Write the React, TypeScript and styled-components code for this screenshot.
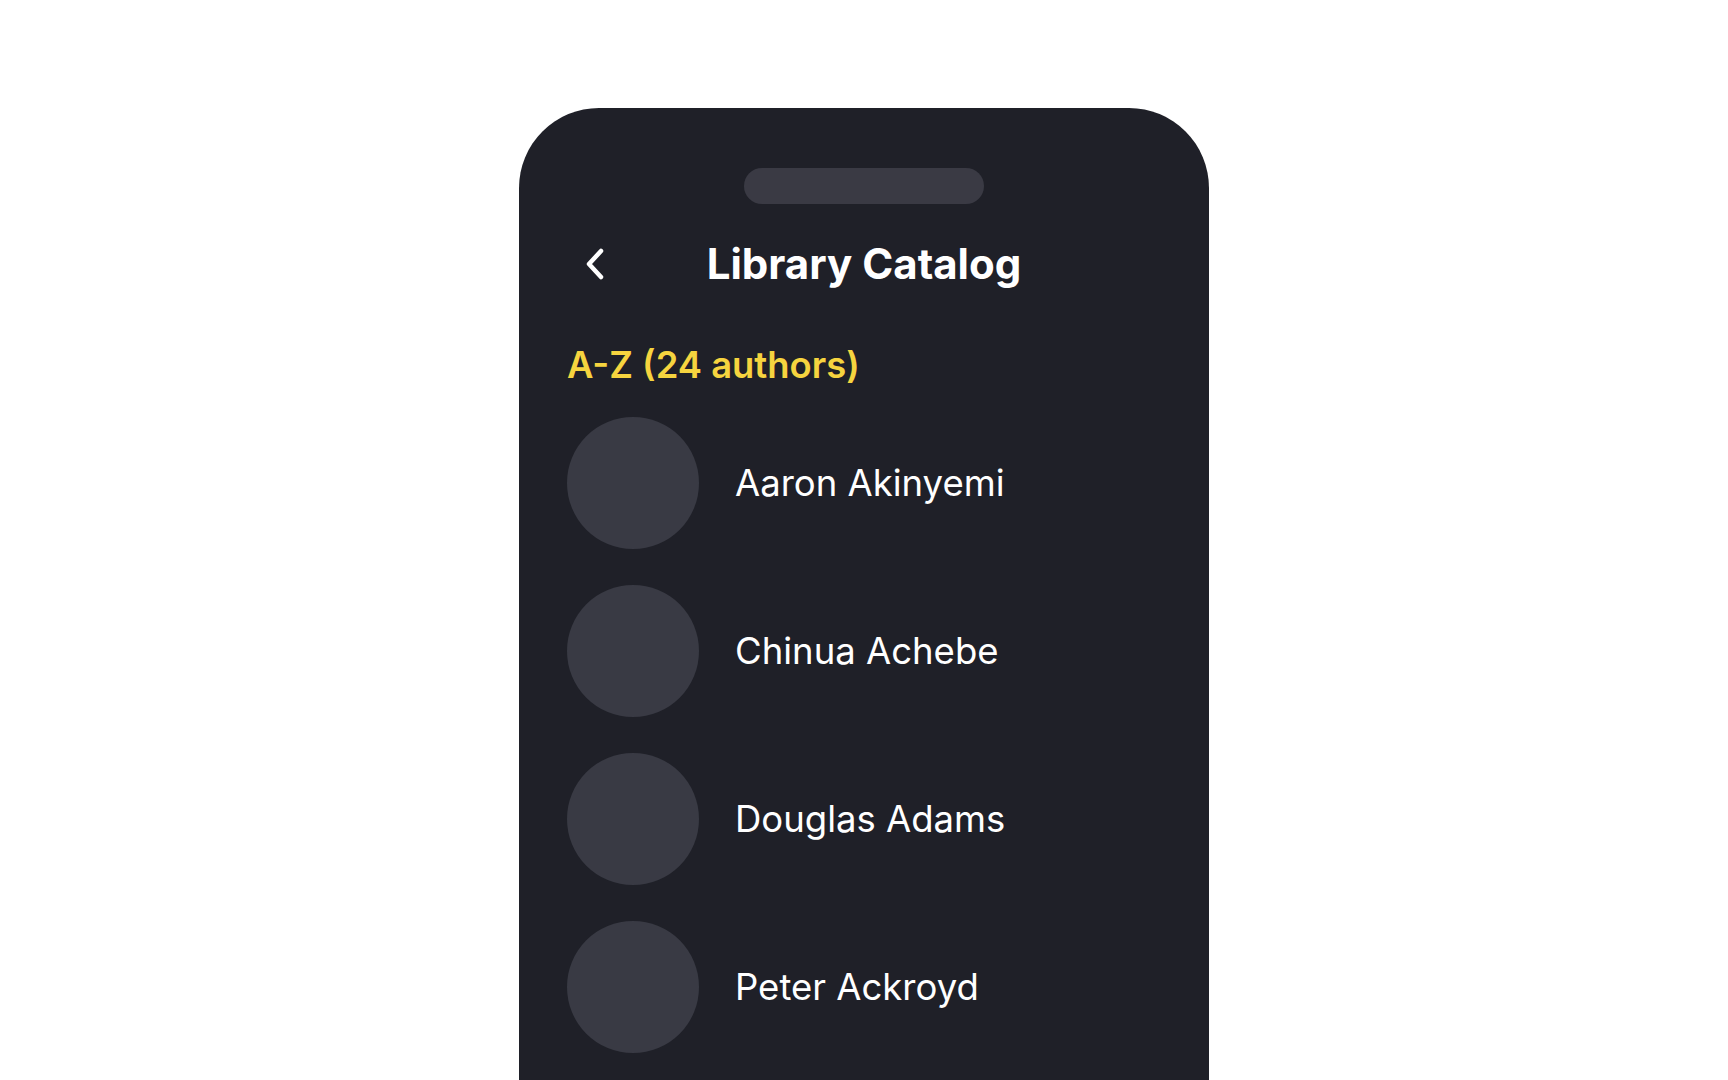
import styled, { createGlobalStyle } from "styled-components";

const GlobalStyle = createGlobalStyle`
  html, body {
    margin: 0;
    padding: 0;
    background: #ffffff;
    overflow: hidden;
  }
  body {
    font-family: Inter, "Noto Sans", "Liberation Sans", sans-serif;
  }
`;

const Screen = styled.div`
  display: flex;
  justify-content: center;
  padding-top: 108px;
  height: 100vh;
  box-sizing: border-box;
`;

const Phone = styled.div`
  width: 690px;
  height: 100%;
  box-sizing: border-box;
  background: #1f2028;
  border-radius: 80px 80px 0 0;
  padding: 60px 48px 0;
  display: flex;
  flex-direction: column;
  overflow: hidden;
`;

const Notch = styled.div`
  align-self: center;
  width: 240px;
  height: 36px;
  border-radius: 18px;
  background: #3a3a44;
  flex-shrink: 0;
`;

const Header = styled.div`
  margin-top: 32px;
  height: 56px;
  display: grid;
  grid-template-columns: 1fr auto 1fr;
  align-items: center;
  flex-shrink: 0;
`;

const BackButton = styled.button`
  width: 56px;
  height: 56px;
  padding: 0;
  border: none;
  background: none;
  color: #ffffff;
  display: flex;
  align-items: center;
  justify-content: center;
  cursor: pointer;
`;

const Title = styled.h1`
  margin: 0;
  font-size: 42px;
  line-height: 1.2;
  font-weight: 700;
  color: #ffffff;
`;

const SectionLabel = styled.h2`
  margin: 52px 0 0;
  font-size: 36.4px;
  line-height: 1.2;
  font-weight: 600;
  color: #f6d43f;
`;

const AuthorList = styled.ul`
  list-style: none;
  margin: 29px 0 0;
  padding: 0;
  display: flex;
  flex-direction: column;
  gap: 36px;
`;

const AuthorRow = styled.li`
  display: flex;
  align-items: center;
  gap: 36px;
`;

const Avatar = styled.div`
  width: 132px;
  height: 132px;
  border-radius: 50%;
  background: #393a44;
  flex-shrink: 0;
`;

const AuthorName = styled.span`
  padding-top: 3px;
  font-size: 36.5px;
  line-height: 1.2;
  font-weight: 400;
  color: #ffffff;
`;

const authors = ["Aaron Akinyemi", "Chinua Achebe", "Douglas Adams", "Peter Ackroyd"];

export default function App() {
  return (
    <>
      <GlobalStyle />
      <Screen>
        <Phone>
          <Notch />
          <Header>
            <BackButton aria-label="Back">
              <svg width="22" height="34" viewBox="0 0 22 34" fill="none">
                <path
                  d="M17 4 L5 17 L17 30"
                  stroke="currentColor"
                  strokeWidth="4.5"
                  strokeLinecap="round"
                  strokeLinejoin="round"
                />
              </svg>
            </BackButton>
            <Title>Library Catalog</Title>
            <div />
          </Header>
          <SectionLabel>A-Z (24 authors)</SectionLabel>
          <AuthorList>
            {authors.map((name) => (
              <AuthorRow key={name}>
                <Avatar />
                <AuthorName>{name}</AuthorName>
              </AuthorRow>
            ))}
          </AuthorList>
        </Phone>
      </Screen>
    </>
  );
}
